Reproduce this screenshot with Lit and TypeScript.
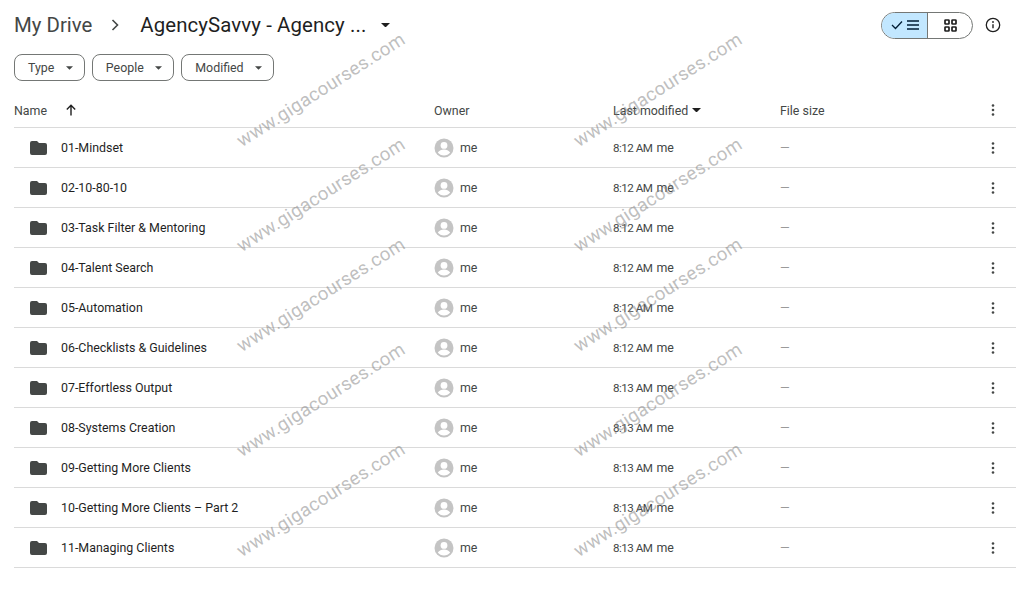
import { LitElement, html, css, svg } from "lit";
import { customElement } from "lit/decorators.js";

const rows = [
  ["01-Mindset", "8:12 AM"],
  ["02-10-80-10", "8:12 AM"],
  ["03-Task Filter & Mentoring", "8:12 AM"],
  ["04-Talent Search", "8:12 AM"],
  ["05-Automation", "8:12 AM"],
  ["06-Checklists & Guidelines", "8:12 AM"],
  ["07-Effortless Output", "8:13 AM"],
  ["08-Systems Creation", "8:13 AM"],
  ["09-Getting More Clients", "8:13 AM"],
  ["10-Getting More Clients – Part 2", "8:13 AM"],
  ["11-Managing Clients", "8:13 AM"],
];
const marks: [number, number][] = [
  [321, 90], [658, 90], [321, 195], [658, 195], [321, 295], [658, 295],
  [321, 400], [658, 400], [321, 500], [658, 500],
];

const caret = svg`<svg class="caret" width="10" height="5" viewBox="0 0 10 5"><path d="M0 0h10L5 5z" fill="currentColor"/></svg>`;
const dots = html`<svg width="4" height="12" viewBox="0 0 4 12"><circle cx="2" cy="1.500" r="1.300" fill="#444746"/><circle cx="2" cy="6" r="1.300" fill="#444746"/><circle cx="2" cy="10.500" r="1.300" fill="#444746"/></svg>`;
const folder = html`<svg width="17" height="14" viewBox="0 0 17 14"><path d="M2 0h5l2 2h6a2 2 0 0 1 2 2v8a2 2 0 0 1-2 2H2a2 2 0 0 1-2-2V2a2 2 0 0 1 2-2z" fill="#444746"/></svg>`;
const avatar = html`<svg width="20" height="20" viewBox="0 0 20 20"><circle cx="10" cy="10" r="9.500" fill="#c4c4c4"/><circle cx="10" cy="7.400" r="3.400" fill="#fff"/><path d="M3.800 14.600c1.400-2.200 3.700-3.100 6.200-3.100s4.800.9 6.200 3.100C14.800 16.500 12.500 17.500 10 17.500s-4.800-1-6.200-2.900z" fill="#fff"/></svg>`;

@customElement("app-root")
export class AppRoot extends LitElement {
  static styles = css`
    :host {
      display: block;
      position: relative;
      width: 1024px;
      height: 606px;
      overflow: hidden;
      background: #fff;
      font-family: "Roboto", "Liberation Sans", sans-serif;
      color: #1f1f1f;
    }
    .page { padding: 0 8px 0 14px; }
    .top { display: flex; align-items: center; height: 50px; }
    .crumb { font-size: 20.400px; color: #444746; }
    .sep { margin: 0 21px 0 19px; display: flex; }
    .title { font-size: 20.400px; color: #1f1f1f; letter-spacing: 0.1px; }
    .title-caret { margin-left: 15px; display: flex; color: #1f1f1f; }
    .title-caret .caret { width: 9px; height: 4.500px; }
    .toggle {
      margin-left: auto; display: flex; width: 90px; height: 25px;
      border: 1px solid #747775; border-radius: 14px; overflow: hidden;
    }
    .seg { display: flex; align-items: center; justify-content: center; }
    .seg.on { width: 45px; background: #c2e7ff; border-right: 1px solid #747775; gap: 4px; color: #001d35; }
    .seg.off { flex: 1; }
    .info { margin: 0 15px 0 12px; display: flex; }
    .filters { display: flex; gap: 7px; height: 27px; margin-top: 4px; }
    .chip {
      display: flex; align-items: center; box-sizing: border-box; height: 27px;
      padding: 0 11px 0 13px; border: 1px solid #747775; border-radius: 8px;
      font-size: 12.400px; color: #444746; gap: 11.500px;
    }
    .chip .caret { width: 7px; height: 4px; }
    .grid { display: grid; grid-template-columns: 420px 179px 167px 1fr 46px; }
    .row { display: contents; }
    .cell {
      display: flex; align-items: center; height: 39px;
      border-bottom: 1px solid #dadada; font-size: 12.400px; color: #444746;
    }
    .head .cell { height: 34px; padding-top: 12px; color: #444746; }
    .name { color: #1f1f1f; padding-left: 16px; gap: 14px; }
    .head .name { padding-left: 0; gap: 0; }
    .arrow { margin-left: 18px; display: flex; }
    .owner { gap: 6px; }
    .mod { gap: 4px; }
    .time { font-size: 11.600px; letter-spacing: -0.5px; }
    .sort { margin-left: 4px; display: flex; color: #1f1f1f; }
    .sort .caret { width: 9px; height: 4.500px; }
    .dash { color: #9a9a9a; }
    .more { justify-content: flex-start; padding-left: 21px; }
    .wm {
      position: absolute; transform: translate(-50%, -50%) rotate(-32.500deg);
      font-size: 18.700px; letter-spacing: 0.3px; color: rgba(130, 130, 130, 0.52);
      white-space: nowrap; pointer-events: none;
    }
  `;

  render() {
    return html`
      <div class="page">
        <div class="top">
          <span class="crumb">My Drive</span>
          <span class="sep"><svg width="8" height="12" viewBox="0 0 8 12"><path d="M1.500 1l5 5-5 5" fill="none" stroke="#444746" stroke-width="1.600"/></svg></span>
          <span class="title">AgencySavvy - Agency ...</span>
          <span class="title-caret">${caret}</span>
          <div class="toggle">
            <div class="seg on">
              <svg width="12" height="10" viewBox="0 0 12 10"><path d="M1 5l3.500 3.500L11 1.500" fill="none" stroke="#001d35" stroke-width="1.300"/></svg>
              <svg width="12" height="10" viewBox="0 0 12 10"><path d="M0 1h12M0 5h12M0 9h12" stroke="#001d35" stroke-width="1.600"/></svg>
            </div>
            <div class="seg off">
              <svg width="13" height="13" viewBox="0 0 13 13"><g fill="none" stroke="#1f1f1f" stroke-width="1.700"><rect x="1" y="1" width="4" height="4" rx=".6"/><rect x="8" y="1" width="4" height="4" rx=".6"/><rect x="1" y="8" width="4" height="4" rx=".6"/><rect x="8" y="8" width="4" height="4" rx=".6"/></g></svg>
            </div>
          </div>
          <span class="info"><svg width="16" height="16" viewBox="0 0 16 16"><circle cx="8" cy="8" r="6.700" fill="none" stroke="#1f1f1f" stroke-width="1.300"/><path d="M8 7.200v4" stroke="#1f1f1f" stroke-width="1.400"/><circle cx="8" cy="5" r=".9" fill="#1f1f1f"/></svg></span>
        </div>
        <div class="filters">
          <div class="chip">Type ${caret}</div>
          <div class="chip">People ${caret}</div>
          <div class="chip">Modified ${caret}</div>
        </div>
        <div class="grid">
          <div class="row head">
            <div class="cell name">Name<span class="arrow"><svg width="12" height="12" viewBox="0 0 12 12"><path d="M6 11.500V1.500M1.800 5.500L6 1.300l4.200 4.200" fill="none" stroke="#1f1f1f" stroke-width="1.400"/></svg></span></div>
            <div class="cell">Owner</div>
            <div class="cell">Last modified<span class="sort">${caret}</span></div>
            <div class="cell">File size</div>
            <div class="cell more">${dots}</div>
          </div>
          ${rows.map(
            ([n, t]) => html`<div class="row">
              <div class="cell name">${folder}<span>${n}</span></div>
              <div class="cell owner">${avatar}<span>me</span></div>
              <div class="cell mod"><span class="time">${t}</span><span>me</span></div>
              <div class="cell dash">—</div>
              <div class="cell more">${dots}</div>
            </div>`
          )}
        </div>
      </div>
      ${marks.map(
        ([x, y]) => html`<div class="wm" style="left:${x}px;top:${y}px">www.gigacourses.com</div>`
      )}
    `;
  }
}
